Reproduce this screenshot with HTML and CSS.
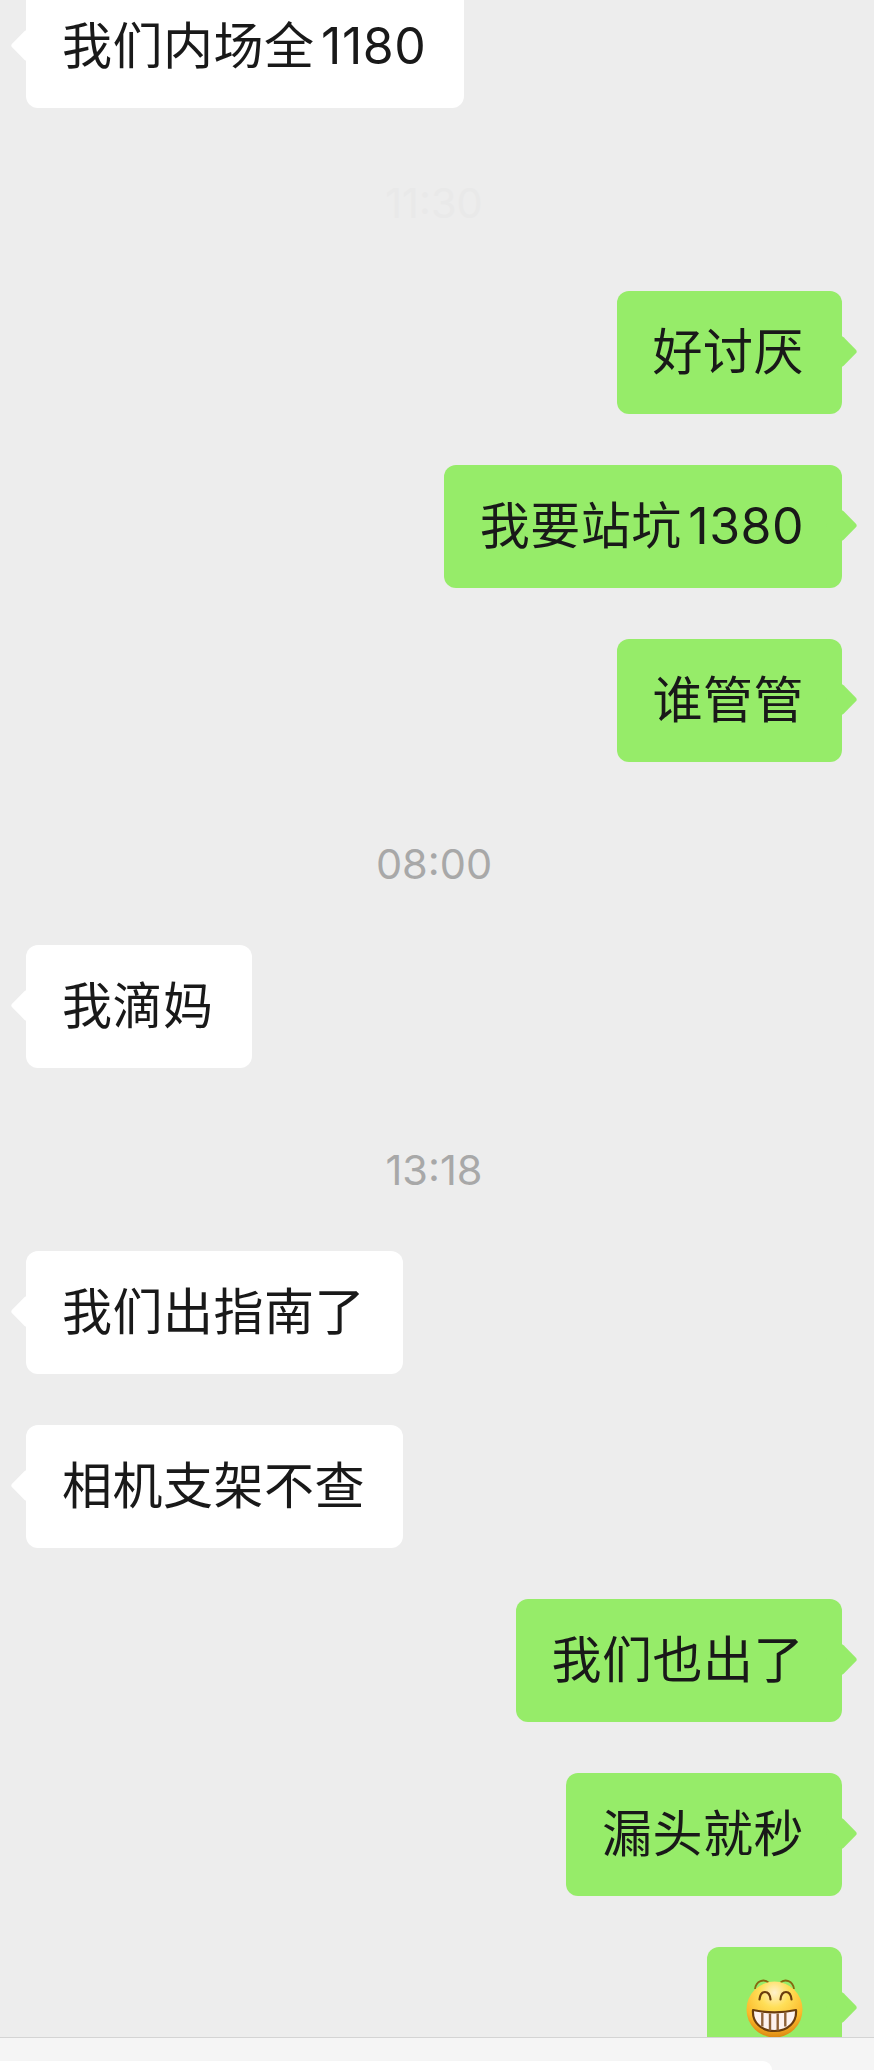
FILE: index.html
```html
<!DOCTYPE html>
<html>
<head>
<title>Chat</title>
<link rel="stylesheet" href="styles.css">
</head>
<body>
<div class="chat">
  <div class="row left"><div class="bubble">我们内场全 1180</div></div>
  <div class="time faint">11:30</div>
  <div class="row right"><div class="bubble">好讨厌</div></div>
  <div class="row right"><div class="bubble">我要站坑 1380</div></div>
  <div class="row right"><div class="bubble">谁管管</div></div>
  <div class="time">08:00</div>
  <div class="row left"><div class="bubble">我滴妈</div></div>
  <div class="time">13:18</div>
  <div class="row left"><div class="bubble">我们出指南了</div></div>
  <div class="row left"><div class="bubble">相机支架不查</div></div>
  <div class="row right"><div class="bubble">我们也出了</div></div>
  <div class="row right"><div class="bubble">漏头就秒</div></div>
  <div class="row right">
    <div class="bubble emoji-bubble">
      <svg class="emoji" viewBox="0 0 58 60">
        <defs>
          <radialGradient id="face" cx="50%" cy="20%" r="82%">
            <stop offset="0" stop-color="#fff1cc"/>
            <stop offset="0.32" stop-color="#ffdf58"/>
            <stop offset="0.72" stop-color="#fcba2b"/>
            <stop offset="1" stop-color="#d9820f"/>
          </radialGradient>
        </defs>
        <path d="M9 10c1-8 9-11 14-6M48 10c-1-8-9-11-14-6" fill="none" stroke="#86680f" stroke-width="1.800"/>
        <circle cx="28.500" cy="30.500" r="28" fill="url(#face)"/>
        <path d="M13.500 20.500c1-10 10-10 11 0M34.500 20.500c1-10 10-10 11 0" fill="none" stroke="#6b3d0c" stroke-width="2.200" stroke-linecap="round"/>
        <path d="M7 31c14 3 29 3 43 0c1 12-8 21-21.500 21S6 43 7 31z" fill="#fdf2ee" stroke="#6b3d0c" stroke-width="2.200" stroke-linejoin="round"/>
        <path d="M16.300 33.500v14M24 34.500v17M31.700 34.500v17M39.300 33.500v14" fill="none" stroke="#8f6238" stroke-width="2.400"/>
      </svg>
    </div>
  </div>
</div>
<footer class="inputbar"><div class="inputbox"></div></footer>
</body>
</html>
```

FILE: styles.css
```css
html, body{
  margin: 0;
  height: 100%;
}
body{
  display: flex;
  flex-direction: column;
  height: 2070px;
  overflow: hidden;
  background-color: #ededed;
  color: #191919;
  font-family: "Inter", "Noto Sans CJK SC", sans-serif;
}
.chat{
  flex: 1;
  min-height: 0;
  overflow: hidden;
  padding: 0 32px 0 26px;
}
.row{
  margin-bottom: 51px;
  display: flex;
}
.row:first-child{
  margin-top: -15px;
}
.left{
  justify-content: flex-start;
}
.right{
  justify-content: flex-end;
}
.bubble{
  position: relative;
  padding: 37px 38px 37px 36px;
  border-radius: 12px;
  font-size: 50px;
  line-height: 49px;
  letter-spacing: 0.5px;
  word-spacing: -8px;
  white-space: nowrap;
}
.left .bubble{
  background-color: #ffffff;
}
.right .bubble{
  background-color: #96ec69;
}
.bubble::after{
  content: "";
  position: absolute;
  top: 49px;
  width: 23px;
  height: 23px;
  border-radius: 3px;
  transform: rotate(45deg);
}
.left .bubble::after{
  left: -11px;
  background-color: #ffffff;
}
.right .bubble::after{
  right: -11px;
  background-color: #96ec69;
}
.time{
  height: 44px;
  margin: 80px 0 59px;
  font-size: 41.500px;
  line-height: 44px;
  text-align: center;
  color: #a8a8a8;
}
.time.faint{
  margin: 73px 0 66px;
  color: #e9e9e9;
}
.emoji-bubble{
  padding: 32px 38px 31px 39px;
}
.emoji{
  display: block;
  width: 58px;
  height: 60px;
}
.inputbar{
  flex: none;
  height: 32px;
  border-top: 1px solid #d4d4d4;
  background-color: #f5f5f5;
}
.inputbox{
  width: 772px;
  height: 9px;
  margin-top: 23px;
  border-radius: 0 12px 0 0;
  background-color: #ffffff;
}
```
